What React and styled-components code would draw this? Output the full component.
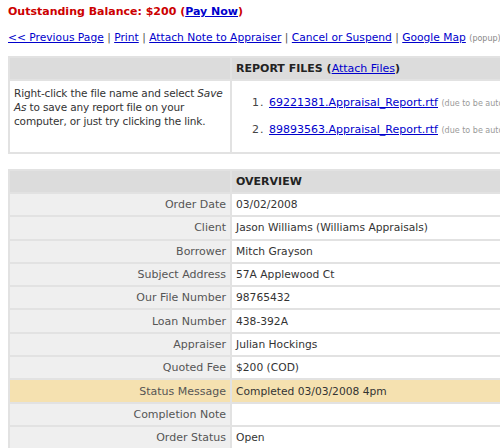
import styled, { createGlobalStyle } from "styled-components";

const Global = createGlobalStyle`
  html, body {
    margin: 0;
    overflow: hidden;
    background: #fff;
  }
  body {
    padding: 5px 8px 0 8px;
    font-family: "DejaVu Sans", Verdana, sans-serif;
    font-size: 11px;
    color: #333;
  }
`

const Balance = styled.div`
  font-size: 11px;
  font-weight: bold;
  color: #cc0000;
  line-height: 14px;

  a {
    color: #0000cc;
  }
`

const NavBar = styled.div`
  margin-top: 12px;
  font-size: 10.7px;
  line-height: 14px;
  color: #555;
  white-space: nowrap;

  a {
    color: #0000cc;
  }
`

const Hint = styled.span`
  font-size: 8px;
  color: #888;
`

const Table = styled.table`
  border-collapse: collapse;
  width: 640px;
  margin-top: ${p => p.$top}px;
  table-layout: fixed;
`

const HeadCell = styled.th`
  background: #dcdcdc;
  border: 2px solid #e2e2e2;
  text-align: left;
  font-weight: bold;
  font-size: 11px;
  color: #222;
  height: 21px;
  padding: 0 4px;
  white-space: nowrap;

  a {
    color: #0000cc;
    font-weight: normal;
  }
`

const CornerCell = styled(HeadCell)`
  width: 212px;
`

const Label = styled.td`
  background: ${p => (p.$status ? "#f5e1b0" : "#efefef")};
  border: 2px solid #e2e2e2;
  text-align: right;
  padding: 0 4px;
  height: 21.3px;
  color: #555;
  font-size: 11px;
  white-space: nowrap;
`

const Value = styled.td`
  background: ${p => (p.$status ? "#f5e1b0" : "#fff")};
  border: 2px solid #e2e2e2;
  padding: 0 4px;
  color: #333;
  font-size: 10.7px;
  white-space: nowrap;
`

const NoteCell = styled.td`
  border: 2px solid #e2e2e2;
  vertical-align: top;
  padding: 5px 2px 0 4px;
  height: 66px;
  font-size: 10.5px;
  letter-spacing: -0.15px;
  line-height: 14px;
  color: #333;
`

const FilesCell = styled.td`
  border: 2px solid #e2e2e2;
  vertical-align: top;
  padding: 0;
`

const FileList = styled.ol`
  margin: 15px 0 0 0;
  padding-left: 37px;
  font-size: 11px;
  line-height: 14px;
  color: #444;

  li {
    height: 27px;
    white-space: nowrap;
  }

  li::marker {
    letter-spacing: 1px;
  }

  a {
    color: #0000cc;
  }
`

const SmallNote = styled.span`
  font-size: 8px;
  color: #999;
`

const files = ["69221381.Appraisal_Report.rtf", "89893563.Appraisal_Report.rtf"]

const overview = [
  ["Order Date", "03/02/2008"],
  ["Client", "Jason Williams (Williams Appraisals)"],
  ["Borrower", "Mitch Grayson"],
  ["Subject Address", "57A Applewood Ct"],
  ["Our File Number", "98765432"],
  ["Loan Number", "438-392A"],
  ["Appraiser", "Julian Hockings"],
  ["Quoted Fee", "$200 (COD)"],
  ["Status Message", "Completed 03/03/2008 4pm", true],
  ["Completion Note", ""],
  ["Order Status", "Open"],
]

const App = () => {
  return (
    <>
      <Global />
      <Balance>
        Outstanding Balance: $200 (<a href="#">Pay Now</a>)
      </Balance>
      <NavBar>
        <a href="#">&lt;&lt; Previous Page</a> | <a href="#">Print</a> |{" "}
        <a href="#">Attach Note to Appraiser</a> | <a href="#">Cancel or Suspend</a> |{" "}
        <a href="#">Google Map</a> <Hint>(popup)</Hint>
      </NavBar>

      <Table $top={10}>
        <tbody>
          <tr>
            <CornerCell />
            <HeadCell>
              REPORT FILES (<a href="#">Attach Files</a>)
            </HeadCell>
          </tr>
          <tr>
            <NoteCell>
              Right-click the file name and select <i>Save As</i> to save any report file on your
              computer, or just try clicking the link.
            </NoteCell>
            <FilesCell>
              <FileList>
                {files.map((f, index) => (
                  <li key={index}>
                    <a href="#">{f}</a> <SmallNote>(due to be auto-deleted)</SmallNote>
                  </li>
                ))}
              </FileList>
            </FilesCell>
          </tr>
        </tbody>
      </Table>

      <Table $top={15}>
        <tbody>
          <tr>
            <CornerCell />
            <HeadCell>OVERVIEW</HeadCell>
          </tr>
          {overview.map(([label, value, status], index) => (
            <tr key={index}>
              <Label $status={status}>{label}</Label>
              <Value $status={status}>{value}</Value>
            </tr>
          ))}
        </tbody>
      </Table>
    </>
  )
}

export default App
